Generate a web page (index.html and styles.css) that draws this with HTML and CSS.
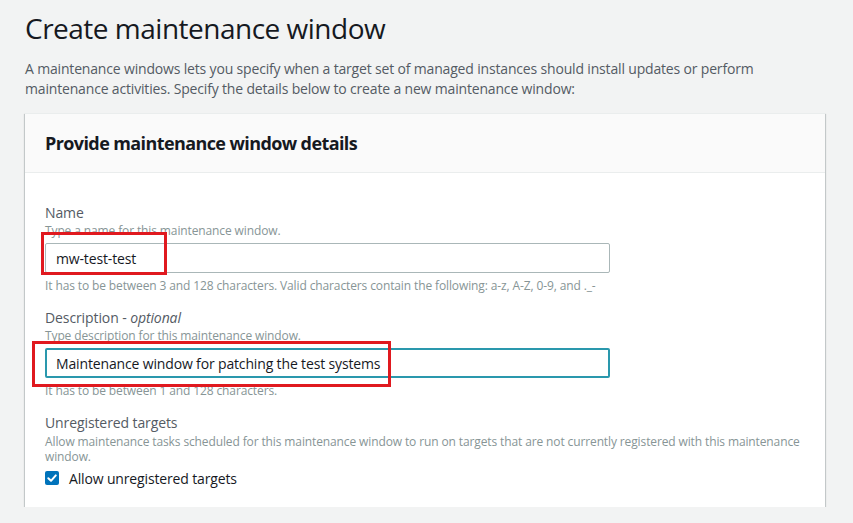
FILE: index.html
```html
<!DOCTYPE html>
<html lang="en">
<head>
    <meta charset="UTF-8">
    <meta name="viewport" content="width=device-width, initial-scale=1.0">
    <title>Create maintenance window</title>
    <link rel="stylesheet" href="styles.css">
</head>
<body>

    <div class="page">
        <h1>Create maintenance window</h1>
        <p class="intro">A maintenance windows lets you specify when a target set of managed instances should install updates or perform maintenance activities. Specify the details below to create a new maintenance window:</p>

        <div class="card">
            <div class="card-header">
                <h2>Provide maintenance window details</h2>
            </div>
            <div class="card-body">

                <div class="field">
                    <div class="label">Name</div>
                    <div class="hint">Type a name for this maintenance window.</div>
                    <div class="input-wrap">
                        <input type="text" class="text-input" value="mw-test-test">
                        <span class="mark mark-name"></span>
                    </div>
                    <div class="constraint">It has to be between 3 and 128 characters. Valid characters contain the following: a-z, A-Z, 0-9, and ._-</div>
                </div>

                <div class="field">
                    <div class="label">Description - <i>optional</i></div>
                    <div class="hint">Type description for this maintenance window.</div>
                    <div class="input-wrap">
                        <input type="text" class="text-input focused" value="Maintenance window for patching the test systems">
                        <span class="mark mark-desc"></span>
                    </div>
                    <div class="constraint">It has to be between 1 and 128 characters.</div>
                </div>

                <div class="field">
                    <div class="label">Unregistered targets</div>
                    <div class="hint long">Allow maintenance tasks scheduled for this maintenance window to run on targets that are not currently registered with this maintenance window.</div>
                    <label class="check">
                        <svg width="14" height="14" viewBox="0 0 14 14">
                            <rect x="0" y="0" width="14" height="14" rx="2" fill="#0073bb"/>
                            <path d="M3.3 7.2 L6 9.8 L10.8 4.4" fill="none" stroke="#fff" stroke-width="2" stroke-linecap="round" stroke-linejoin="round"/>
                        </svg>
                        <span>Allow unregistered targets</span>
                    </label>
                </div>

            </div>
        </div>
    </div>

</body>
</html>
```

FILE: styles.css
```css
body {
    margin: 0;
    background: #f2f3f3;
    font-family: 'Open Sans', 'Noto Sans', sans-serif;
    color: #16191f;
}

.page {
    padding: 10px 28px 0 25px;
}

h1 {
    font-size: 28px;
    font-weight: 400;
    line-height: 36px;
    letter-spacing: -0.5px;
    margin: 0;
    color: #16191f;
}

.intro {
    font-size: 14px;
    line-height: 20px;
    letter-spacing: -0.17px;
    color: #545b64;
    margin: 13px 0 0;
    max-width: 760px;
}

.card {
    margin-top: 14px;
    width: 800px;
    background: #ffffff;
    box-shadow: 0 1px 1px 0 rgba(0, 28, 36, 0.3), 1px 1px 1px 0 rgba(0, 28, 36, 0.15), -1px 1px 1px 0 rgba(0, 28, 36, 0.15);
    border-top: 1px solid #eaeded;
}

.card-header {
    background: #fafafa;
    border-bottom: 1px solid #eaeded;
    height: 58px;
    display: flex;
    align-items: center;
    padding: 0 20px;
}

h2 {
    font-size: 18px;
    font-weight: 700;
    letter-spacing: -0.6px;
    margin: 0;
    color: #16191f;
}

.card-body {
    padding: 30px 20px 18px;
}

.field + .field {
    margin-top: 14px;
}

.label {
    font-size: 14px;
    line-height: 20px;
    letter-spacing: -0.1px;
    color: #545b64;
}

.hint {
    font-size: 12px;
    line-height: 16px;
    letter-spacing: -0.12px;
    color: #879596;
}

.hint.long {
    line-height: 15px;
    padding-top: 1px;
}

.input-wrap {
    position: relative;
    width: 565px;
    margin-top: 4px;
}

.text-input {
    box-sizing: border-box;
    display: block;
    width: 565px;
    height: 30px;
    padding: 0 10px;
    border: 1px solid #aab7b8;
    border-radius: 2px;
    font-family: inherit;
    font-size: 14px;
    letter-spacing: -0.15px;
    color: #16191f;
    background: #fff;
    outline: none;
}

.text-input.focused {
    border: 2px solid #2a98ad;
    padding: 0 9px;
}

.constraint {
    font-size: 12px;
    line-height: 16px;
    letter-spacing: -0.12px;
    color: #879596;
    margin-top: 5px;
}

/* red annotation boxes from the screenshot */
.mark {
    position: absolute;
    border: 3px solid #e0191f;
    pointer-events: none;
}

.mark-name {
    left: -4px;
    top: -11px;
    width: 120px;
    height: 37px;
}

.mark-desc {
    left: -13px;
    top: -7px;
    width: 353px;
    height: 40px;
}

.check {
    display: flex;
    align-items: center;
    gap: 10px;
    margin-top: 3px;
    height: 22px;
    font-size: 14px;
    letter-spacing: -0.15px;
    color: #16191f;
}

.check svg {
    display: block;
}
```
